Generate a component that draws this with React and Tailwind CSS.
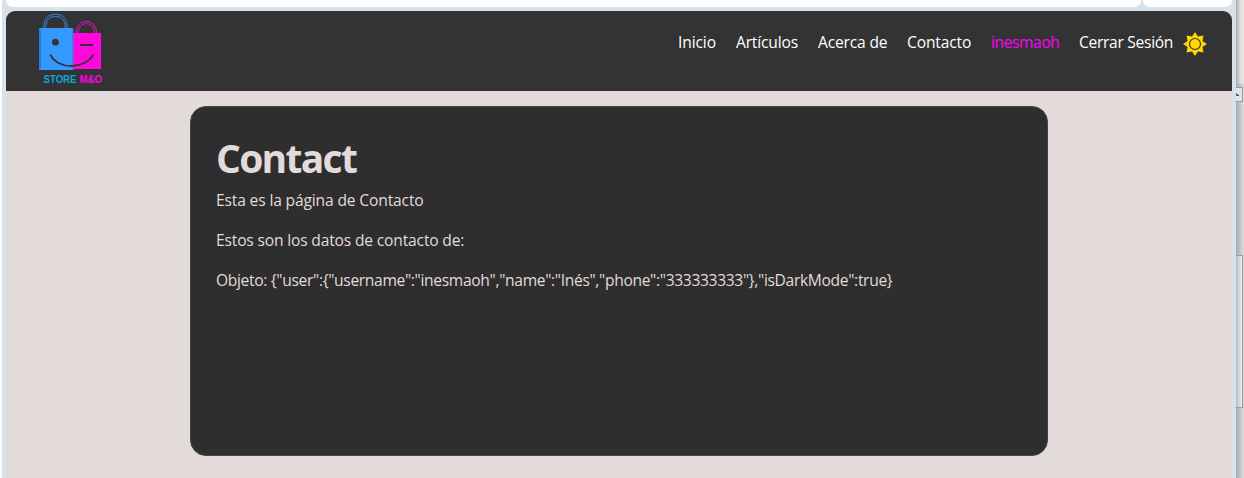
const links = [
  { label: 'Inicio', style: 'w-[38px] tracking-[-0.12px] text-white' },
  { label: 'Artículos', style: 'w-[62px] tracking-[-0.18px] text-white' },
  { label: 'Acerca de', style: 'w-[69px] tracking-[-0.18px] text-white' },
  { label: 'Contacto', style: 'w-[64px] tracking-[-0.14px] text-white' },
  { label: 'inesmaoh', style: 'w-[68px] tracking-[-0.4px] text-[#ff00ff]' },
  { label: 'Cerrar Sesión', style: 'w-[94px] tracking-[-0.3px] text-white' },
];

function Logo() {
  return (
    <svg width="66" height="74" viewBox="38 12 66 74" className="mt-px ml-8 shrink-0">
      <g fill="none" strokeWidth="1">
        <path d="M43.7 28C43.7 19 48 14.2 55.5 14.2S67.3 19 67.3 28" stroke="#2d8be8" />
        <path d="M45.7 28C45.7 20.5 49 16.5 55.5 16.5S65.3 20.5 65.3 28" stroke="#2d8be8" />
        <path d="M76 33C76.6 25.5 80.5 21.5 86.3 21.5S96.1 25.5 96.8 33" stroke="#e80ccb" />
        <path d="M78 33C78.7 27 81.5 23.7 86.3 23.7S94 27 94.8 33" stroke="#e80ccb" />
      </g>
      <path d="M39 28H73V70H39Z" fill="#3399ff" />
      <path d="M39 28L41 30V68L39 70Z" fill="#287ccc" />
      <path d="M73 33H101V69H73Z" fill="#ff08dc" />
      <path d="M72 28H73.5V70H72Z" fill="#477bd5" />
      <circle cx="55.4" cy="42.2" r="3.4" fill="#333" />
      <path d="M80 45H93" stroke="#333" strokeWidth="2" />
      <path d="M50.2 54.5C58 70 84 70 93.5 54.5" fill="none" stroke="#333" strokeWidth="1.8" />
      <text x="43.5" y="83" fontFamily="Liberation Sans, sans-serif" fontWeight="700" fontSize="10.1" textLength="33" lengthAdjust="spacingAndGlyphs" fill="#0da5dc">STORE</text>
      <text x="79.5" y="83" fontFamily="Liberation Sans, sans-serif" fontWeight="700" fontSize="10.1" textLength="22.5" lengthAdjust="spacingAndGlyphs" fill="#ff00e6">M&amp;O</text>
    </svg>
  );
}

function Sun() {
  return (
    <svg width="24" height="24" viewBox="0 0 24 24" className="ml-2.5 mt-[21px] shrink-0">
      <path
        d="M12 0L14.9 4.6L20.5 3.5L19.4 9.1L24 12L19.4 14.9L20.5 20.5L14.9 19.4L12 24L9.1 19.4L3.5 20.5L4.6 14.9L0 12L4.6 9.1L3.5 3.5L9.1 4.6Z"
        fill="#ffd700"
      />
      <circle cx="12" cy="12" r="5.5" fill="#ffd700" stroke="#333" strokeWidth="1.2" />
    </svg>
  );
}

function Header() {
  return (
    <header className="flex h-20 items-start rounded-t-[9px] bg-[#333333]">
      <Logo />
      <nav className="ml-auto mr-[25px] flex">
        <ul className="flex gap-5 pt-[19px] text-[15.6px] leading-6">
          {links.map((link) => (
            <li key={link.label} className={'whitespace-nowrap ' + link.style}>
              {link.label}
            </li>
          ))}
        </ul>
        <Sun />
      </nav>
    </header>
  );
}

function BrowserEdge() {
  return (
    <aside className="flex w-2 flex-col bg-linear-to-r from-[#aaa] to-[#ddd]">
      <div className="h-[84px] bg-linear-to-r from-[#aaa] via-[#dedcda] to-[#eceae8]" />
      <div className="mt-[3px] mr-px flex h-[15px] items-center border border-l-0 border-[#999] bg-[#e4e4e4]">
        <svg width="4" height="3" viewBox="0 0 5 4">
          <path d="M0 0L4 3V4H0Z" fill="#555" />
        </svg>
      </div>
      <div className="mt-[153px] mr-px h-[153px] border border-l-0 border-[#999] bg-linear-to-r from-[#bbb] to-[#eee]" />
    </aside>
  );
}

export default function App() {
  return (
    <div className="flex h-[478px] w-[1244px] overflow-hidden bg-white pl-0.5 font-['Open_Sans','Noto_Sans',sans-serif]">
      <div className="flex w-[1234px] flex-col bg-[#d7e2ea] px-1">
        <div className="mb-1 flex h-[7px] gap-0.5">
          <div className="w-[1135px] rounded-b-[7px] bg-white" />
          <div className="flex-1 rounded-b-[7px] bg-white" />
        </div>
        <Header />
        <main className="flex flex-1 justify-center bg-[#e3dada] pt-[15px]">
          <section className="h-[350px] w-[858px] rounded-[16px] border border-[#444] bg-[#2e2e2e] px-[25px] pt-[27px] text-[15.6px] leading-6 text-[#e3dada]">
            <h1 className="mb-1.5 text-[39px] leading-[48px] font-bold tracking-[-1.7px]">Contact</h1>
            <p className="mb-4 tracking-[-0.15px]">Esta es la página de Contacto</p>
            <p className="mb-4 tracking-[-0.17px]">Estos son los datos de contacto de:</p>
            <p className="tracking-[-0.33px]">
              {'Objeto: {"user":{"username":"inesmaoh","name":"Inés","phone":"333333333"},"isDarkMode":true}'}
            </p>
          </section>
        </main>
      </div>
      <BrowserEdge />
    </div>
  );
}
